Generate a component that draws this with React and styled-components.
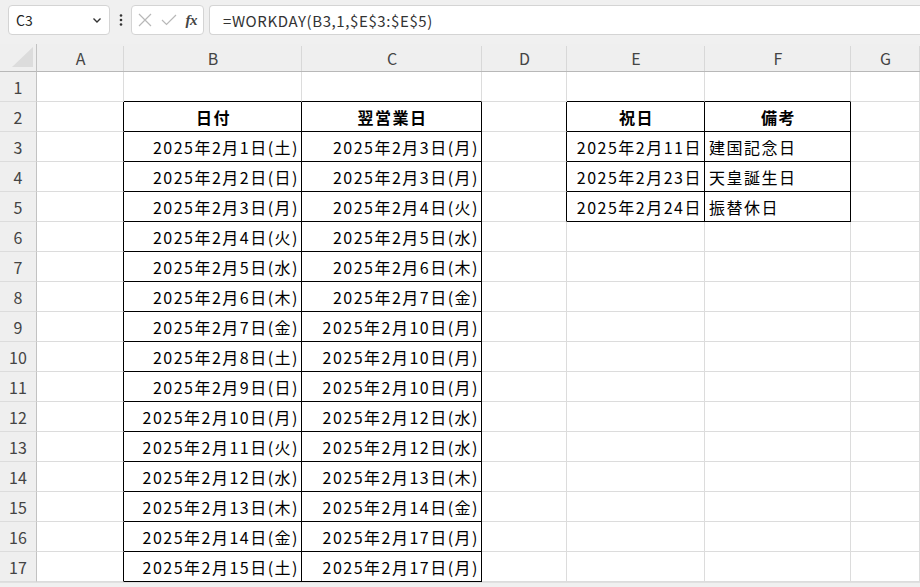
import React from "react";
import styled, { createGlobalStyle } from "styled-components";

const GlobalStyle = createGlobalStyle`
  html, body {
    margin: 0;
    padding: 0;
    background: #ffffff;
  }
  body {
    font-family: "Noto Sans CJK JP", "Noto Sans", sans-serif;
  }
`;

const COLS = ["A", "B", "C", "D", "E", "F", "G"];
const WEEK = ["日", "月", "火", "水", "木", "金", "土"];
const NEXT_DAYS = [3, 3, 4, 5, 6, 7, 10, 10, 10, 12, 12, 13, 14, 17, 17];
const HOLIDAYS = [
  ["2025年2月11日", "建国記念日"],
  ["2025年2月23日", "天皇誕生日"],
  ["2025年2月24日", "振替休日"],
];

const fmt = (d) => `2025年2月${d}日(${WEEK[new Date(2025, 1, d).getDay()]})`;

// build the sheet contents: rows 1..17, columns A..G
const buildCells = () => {
  const cells = {};
  cells["B2"] = { text: "日付", head: true };
  cells["C2"] = { text: "翌営業日", head: true };
  cells["E2"] = { text: "祝日", head: true };
  cells["F2"] = { text: "備考", head: true };
  for (let i = 0; i < 15; i++) {
    cells[`B${i + 3}`] = { text: fmt(i + 1), align: "right" };
    cells[`C${i + 3}`] = { text: fmt(NEXT_DAYS[i]), align: "right" };
  }
  HOLIDAYS.forEach(([date, note], i) => {
    cells[`E${i + 3}`] = { text: date, align: "right" };
    cells[`F${i + 3}`] = { text: note, align: "left" };
  });
  return cells;
};

const boxed = (r, c) => {
  if (r >= 2 && r <= 18 && (c === 1 || c === 2)) return true;
  if (r >= 2 && r <= 5 && (c === 4 || c === 5)) return true;
  return false;
};

const Page = styled.div`
  width: 920px;
  height: 587px;
  overflow: hidden;
  background: #f0f0f0;
  display: flex;
  flex-direction: column;
`;

const Toolbar = styled.div`
  height: 44px;
  display: flex;
  align-items: flex-start;
  padding: 5px 0 0 8px;
  box-sizing: border-box;
`;

const Box = styled.div`
  height: 30px;
  box-sizing: border-box;
  background: #ffffff;
  border: 1px solid #d4d4d4;
  border-radius: 4px;
  display: flex;
  align-items: center;
`;

const NameBox = styled(Box)`
  width: 102px;
  padding: 0 6px 0 7px;
  justify-content: space-between;
  font-size: 14px;
  color: #222;
`;

const Dots = styled.div`
  width: 21px;
  height: 30px;
  display: flex;
  align-items: center;
  justify-content: center;
  color: #333;
`;

const ButtonBox = styled(Box)`
  width: 73px;
  padding: 0 6px 0 6px;
  justify-content: space-between;
`;

const FxLabel = styled.span`
  font-family: "Liberation Serif", "DejaVu Serif", serif;
  font-style: italic;
  font-weight: bold;
  font-size: 15px;
  color: #444;
  letter-spacing: -0.5px;
`;

const FormulaBox = styled(Box)`
  flex: 1;
  margin-left: 5px;
  border-right: none;
  border-radius: 4px 0 0 4px;
  padding-left: 13px;
  font-size: 15px;
  letter-spacing: 0.6px;
  color: #333;
`;

const Sheet = styled.div`
  display: grid;
  grid-template-columns: 37px 87px 178px 180px 85px 138px 146px 1fr;
  grid-auto-rows: 30px;
  grid-template-rows: 28px;
  background: #ffffff;
`;

const Corner = styled.div`
  background: #efefef;
  border-right: 1px solid #c2c2c2;
  border-bottom: 1px solid #b8b8b8;
  position: relative;
  &::after {
    content: "";
    position: absolute;
    right: 3px;
    bottom: 4px;
    width: 0;
    height: 0;
    border-left: 21px solid transparent;
    border-bottom: 20px solid #dcdcdc;
  }
`;

const ColHead = styled.div`
  background: #efefef;
  border-bottom: 1px solid #b8b8b8;
  display: flex;
  align-items: center;
  justify-content: center;
  font-size: 16px;
  color: #444;
  position: relative;
  &::after {
    content: "";
    position: absolute;
    right: 0;
    top: 2px;
    bottom: 0;
    width: 1px;
    background: #d8d8d8;
  }
`;

const RowHead = styled.div`
  background: #efefef;
  border-right: 1px solid #c2c2c2;
  border-bottom: 1px solid #dcdcdc;
  display: flex;
  align-items: center;
  justify-content: center;
  font-size: 16px;
  color: #444;
`;

const Cell = styled.div`
  box-sizing: border-box;
  border-right: 1px solid ${({ $right }) => ($right ? "#000" : "#dcdcdc")};
  border-bottom: 1px solid ${({ $bottom }) => ($bottom ? "#000" : "#dcdcdc")};
  display: flex;
  align-items: center;
  justify-content: ${({ $align }) =>
    $align === "right" ? "flex-end" : $align === "left" ? "flex-start" : "center"};
  padding: 0 2px 0 4px;
  font-size: 16px;
  letter-spacing: 1.5px;
  font-weight: ${({ $head }) => ($head ? 700 : 400)};
  color: #000;
  white-space: nowrap;
  overflow: hidden;
`;

const BottomStrip = styled.div`
  flex: 1;
  background: #f0f0f0;
  border-top: 1px solid #e0e0e0;
`;

const Chevron = () => (
  <svg width="12" height="12" viewBox="0 0 12 12">
    <path d="M2.5 4.5 L6 8 L9.5 4.5" fill="none" stroke="#333" strokeWidth="1.4" />
  </svg>
);

const CrossIcon = () => (
  <svg width="14" height="14" viewBox="0 0 14 14">
    <path d="M1 1 L13 13 M13 1 L1 13" stroke="#b8b8b8" strokeWidth="1.2" />
  </svg>
);

const CheckIcon = () => (
  <svg width="16" height="12" viewBox="0 0 16 12">
    <path d="M1 6 L5.5 10.5 L15 1" fill="none" stroke="#b8b8b8" strokeWidth="1.2" />
  </svg>
);

const VDots = () => (
  <svg width="4" height="14" viewBox="0 0 4 14">
    <circle cx="2" cy="2.5" r="1.3" fill="#333" />
    <circle cx="2" cy="7" r="1.3" fill="#333" />
    <circle cx="2" cy="11.5" r="1.3" fill="#333" />
  </svg>
);

export default function App() {
  const cells = buildCells();
  const rows = Array.from({ length: 17 }, (_, i) => i + 1);

  return (
    <>
      <GlobalStyle />
      <Page>
        <Toolbar>
          <NameBox>
            <span>C3</span>
            <Chevron />
          </NameBox>
          <Dots>
            <VDots />
          </Dots>
          <ButtonBox>
            <CrossIcon />
            <CheckIcon />
            <FxLabel>fx</FxLabel>
          </ButtonBox>
          <FormulaBox>=WORKDAY(B3,1,$E$3:$E$5)</FormulaBox>
        </Toolbar>
        <Sheet>
          <Corner />
          {COLS.map((c) => (
            <ColHead key={c}>{c}</ColHead>
          ))}
          {rows.map((r) => (
            <React.Fragment key={r}>
              <RowHead>{r}</RowHead>
              {COLS.map((c, ci) => {
                const cell = cells[`${c}${r}`] || {};
                return (
                  <Cell
                    key={c}
                    $right={boxed(r, ci) || boxed(r, ci + 1)}
                    $bottom={boxed(r, ci) || boxed(r + 1, ci)}
                    $align={cell.align}
                    $head={cell.head}
                  >
                    {cell.text}
                  </Cell>
                );
              })}
            </React.Fragment>
          ))}
        </Sheet>
        <BottomStrip />
      </Page>
    </>
  );
}
